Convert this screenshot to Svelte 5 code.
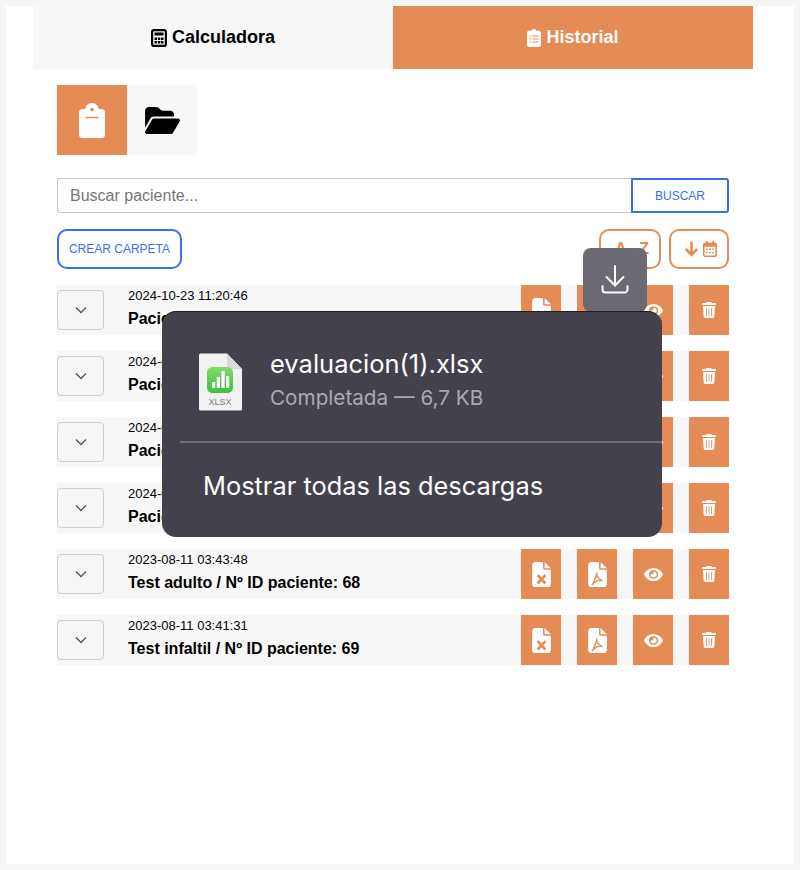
<script>
    const rows = [
        { date: "2024-10-23 11:20:46", title: "Paciente / Nº ID paciente: 74" },
        { date: "2024-09-12 10:14:22", title: "Paciente / Nº ID paciente: 73" },
        { date: "2024-06-05 09:31:10", title: "Paciente / Nº ID paciente: 72" },
        { date: "2024-02-19 16:02:37", title: "Paciente / Nº ID paciente: 71" },
        { date: "2023-08-11 03:43:48", title: "Test adulto / Nº ID paciente: 68" },
        { date: "2023-08-11 03:41:31", title: "Test infaltil / Nº ID paciente: 69" }
    ]

    const filePath = "M64 0C28.7 0 0 28.7 0 64V448c0 35.3 28.7 64 64 64H320c35.3 0 64-28.7 64-64V160H256c-17.7 0-32-14.3-32-32V0H64zM256 0V128H384L256 0z"
</script>

<div class="page">
    <div class="tabs">
        <button class="tab">
            <svg class="tab-icon" viewBox="0 0 16 18" width="16" height="18">
                <rect x="1.1" y="1.1" width="13.8" height="15.800" rx="2" fill="none" stroke="currentColor" stroke-width="2.200"/>
                <rect x="3.500" y="3.500" width="9" height="3" fill="currentColor"/>
                <path d="M3.500 8.500h2.500v2.500H3.500zM6.800 8.500h2.500v2.500H6.800zM10 8.500h2.500v2.500H10zM3.500 12h2.500v2.500H3.500zM6.800 12h2.500v2.500H6.800zM10 12h2.500v2.500H10z" fill="currentColor"/>
            </svg>
            Calculadora
        </button>
        <button class="tab active">
            <svg class="tab-icon" viewBox="0 0 14 18" width="14" height="18">
                <path d="M4.600 1.800a2.400 1.800 0 0 1 4.800 0h2.600a2 2 0 0 1 2 2V16a2 2 0 0 1-2 2H2a2 2 0 0 1-2-2V3.800a2 2 0 0 1 2-2z" fill="currentColor"/>
                <path d="M2.500 7h1.500M5.500 7h6M2.500 10h1.500M5.500 10h6M2.500 13h1.500M5.500 13h6" stroke="#e58b55" stroke-width="1.200"/>
            </svg>
            Historial
        </button>
    </div>

    <div class="content">
        <div class="views">
            <button class="view active" aria-label="Historial">
                <svg viewBox="0 0 26 35" width="26" height="35">
                    <path d="M6.500 6C6.500 2.500 9.400 0 13 0s6.500 2.500 6.500 6H22.500a3.500 3.500 0 0 1 3.500 3.500V31.500a3.500 3.500 0 0 1-3.500 3.500H3.500a3.500 3.500 0 0 1-3.500-3.500V9.500A3.500 3.500 0 0 1 3.500 6z" fill="#fff"/>
                    <circle cx="13" cy="6.500" r="1.800" fill="#e58b55"/>
                    <path d="M6.500 14.500h13" stroke="#e58b55" stroke-width="1.500"/>
                </svg>
            </button>
            <button class="view" aria-label="Carpetas">
                <svg viewBox="0 0 576 512" width="35" height="31">
                    <path d="M88.700 223.800L0 375.800V96C0 60.700 28.700 32 64 32H181.500c17 0 33.300 6.700 45.300 18.700l26.500 26.500c12 12 28.300 18.700 45.300 18.700H416c35.300 0 64 28.700 64 64v32H144c-22.800 0-43.800 12.100-55.300 31.800zm27.600 16.100C122.100 230 132.600 224 144 224H544c11.500 0 22 6.100 27.700 16.100s5.700 22.200-.1 32.100l-112 192C453.900 474 443.400 480 432 480H32c-11.500 0-22-6.100-27.700-16.100s-5.700-22.200 .1-32.100l112-192z" fill="#000"/>
                </svg>
            </button>
        </div>

        <div class="search">
            <input type="text" placeholder="Buscar paciente..." />
            <button class="search-btn">BUSCAR</button>
        </div>

        <div class="toolbar">
            <button class="new-folder">CREAR CARPETA</button>
            <div class="sorters">
                <button class="sorter az">A Z</button>
                <button class="sorter by-date" aria-label="Ordenar por fecha">
                    <svg viewBox="0 0 32 16" width="32" height="16">
                        <path d="M6.500 .5v13.500M.9 8l5.600 5.800L12.100 8" fill="none" stroke="currentColor" stroke-width="2.600"/>
                        <rect x="18.800" y="2.300" width="12.400" height="12.900" rx="1.300" fill="none" stroke="currentColor" stroke-width="1.600"/>
                        <path d="M18.800 3h12.400v2.800H18.800zM21 0h1.800V3H21zM27.200 0H29V3h-1.800z" fill="currentColor"/>
                        <path d="M21 7.500h1.800v1.500H21zM24.100 7.500h1.800v1.500h-1.800zM27.200 7.500H29v1.500h-1.800zM21 10.800h1.800v1.500H21zM24.100 10.800h1.800v1.500h-1.800zM27.200 10.800H29v1.500h-1.800z" fill="currentColor"/>
                    </svg>
                </button>
            </div>
        </div>

        <div class="list">
            {#each rows as row}
                <div class="row">
                    <button class="toggle" aria-label="Desplegar">
                        <svg viewBox="0 0 12 8" width="12" height="8">
                            <path d="M1 1.500l5 5 5-5" fill="none" stroke="#555" stroke-width="1.300"/>
                        </svg>
                    </button>
                    <div class="info">
                        <div class="date">{row.date}</div>
                        <div class="title">{row.title}</div>
                    </div>
                    <div class="actions">
                        <button class="action" aria-label="Excel">
                            <svg viewBox="0 0 384 512" width="19" height="25">
                                <path d={filePath} fill="#fff"/>
                                <path d="M112 270l160 170M272 270L112 440" stroke="#e58b55" stroke-width="56"/>
                            </svg>
                        </button>
                        <button class="action" aria-label="PDF">
                            <svg viewBox="0 0 384 512" width="19" height="25">
                                <path d={filePath} fill="#fff"/>
                                <path d="M178 222c-12 60 10 110 110 158-70-14-150 20-200 82 40-80 80-150 90-240z" fill="none" stroke="#e58b55" stroke-width="28" stroke-linejoin="round"/>
                            </svg>
                        </button>
                        <button class="action" aria-label="Ver">
                            <svg viewBox="0 0 576 512" width="19" height="15" preserveAspectRatio="none">
                                <path d="M288 32c-80.800 0-145.500 36.800-192.600 80.600C48.600 156 17.300 208 2.500 243.700c-3.300 7.900-3.300 16.700 0 24.600C17.300 304 48.600 356 95.400 399.400C142.500 443.200 207.200 480 288 480s145.500-36.800 192.600-80.600c46.800-43.500 78.100-95.400 93-131.100c3.300-7.900 3.300-16.700 0-24.600c-14.900-35.700-46.200-87.700-93-131.100C433.500 68.800 368.800 32 288 32zM144 256a144 144 0 1 1 288 0 144 144 0 1 1 -288 0zm144-64c0 35.300-28.700 64-64 64c-7.100 0-13.900-1.200-20.300-3.300c-5.500-1.800-11.900 1.600-11.700 7.400c.3 6.900 1.300 13.800 3.200 20.700c13.700 51.200 66.400 81.600 117.600 67.900s81.600-66.400 67.900-117.600c-11.100-41.500-47.800-69.400-88.600-71.100c-5.800-.2-9.200 6.100-7.400 11.700c2.100 6.400 3.300 13.200 3.300 20.300z" fill="#fff"/>
                            </svg>
                        </button>
                        <button class="action" aria-label="Borrar">
                            <svg viewBox="0 0 448 512" width="14" height="16">
                                <path d="M135.200 17.700L128 32H32C14.300 32 0 46.300 0 64S14.300 96 32 96H416c17.700 0 32-14.300 32-32s-14.300-32-32-32H320l-7.200-14.300C307.400 6.800 296.300 0 284.200 0H163.800c-12.100 0-23.200 6.800-28.600 17.700zM416 128H32L53.200 467c1.600 25.300 22.600 45 47.900 45H346.900c25.300 0 46.300-19.700 47.900-45L416 128z" fill="#fff"/>
                                <path d="M144 190v260M224 190v260M304 190v260" stroke="#e58b55" stroke-width="26"/>
                            </svg>
                        </button>
                    </div>
                </div>
            {/each}
        </div>
    </div>

    <!-- browser download popover, sits over the page -->
    <div class="dl-tile">
        <svg viewBox="0 0 28 30" width="28" height="30">
            <path d="M14 1v19M5.500 12l8.500 8.500 8.500-8.500M1.500 21v3.500a3 3 0 0 0 3 3h19a3 3 0 0 0 3-3V21" fill="none" stroke="#fafafc" stroke-width="2" stroke-linecap="round"/>
        </svg>
    </div>
    <div class="dl-panel">
        <div class="dl-file">
            <div class="file-icon">
                <svg viewBox="0 0 44 58" width="44" height="58">
                    <defs>
                        <linearGradient id="sheet-green" x1="0" y1="0" x2="0" y2="1">
                            <stop offset="0" stop-color="#7fdc6c"/>
                            <stop offset="1" stop-color="#3fbf3c"/>
                        </linearGradient>
                    </defs>
                    <path d="M1 2a1.500 1.500 0 0 1 1.500-1.500H29L44 16v40a1.500 1.500 0 0 1-1.500 1.500h-40A1.500 1.500 0 0 1 1 56z" fill="#f1f1f2"/>
                    <path d="M29 .5V13a3 3 0 0 0 3 3h12z" fill="#d9d9db"/>
                    <rect x="9" y="14" width="26" height="26" rx="5.500" fill="url(#sheet-green)"/>
                    <path d="M14 29h3.200v6H14zM18.800 24h3.200v11h-3.200zM23.400 18h3.200v17h-3.200zM28 23h3.200v12H28z" fill="#fff"/>
                </svg>
                <span class="file-ext">XLSX</span>
            </div>
            <div class="file-text">
                <div class="file-name">evaluacion(1).xlsx</div>
                <div class="file-meta">Completada — 6,7 KB</div>
            </div>
        </div>
        <div class="dl-all">Mostrar todas las descargas</div>
    </div>
</div>

<style>
    :global(body) {
        background: #f5f5f5;
        font-family: "Liberation Sans", Arial, sans-serif;
    }

    button {
        font-family: inherit;
        cursor: pointer;
        border: none;
        padding: 0;
    }

    .page {
        position: relative;
        width: 788px;
        height: 858px;
        margin: 6px;
        padding: 0 41px 0 27px;
        box-sizing: border-box;
        background: #fff;
    }

    .tabs {
        display: grid;
        grid-template-columns: 1fr 1fr;
        height: 63px;
    }

    .tab {
        display: flex;
        align-items: center;
        justify-content: center;
        gap: 5px;
        font-size: 18px;
        font-weight: bold;
        color: #000;
        background: #f7f7f7;
    }

    .tab.active {
        color: #fff;
        background: #e58b55;
    }

    .content {
        padding: 16px 24px 0;
    }

    .views {
        display: flex;
    }

    .view {
        display: flex;
        align-items: center;
        justify-content: center;
        width: 70px;
        height: 70px;
        background: #f7f7f7;
    }

    .view.active {
        background: #e58b55;
    }

    .search {
        display: flex;
        height: 35px;
        margin-top: 23px;
    }

    input {
        flex: 1;
        min-width: 0;
        padding: 0 12px;
        font-family: inherit;
        font-size: 16px;
        background: #fff;
        border: 1px solid #c8c8c8;
        border-right: none;
        border-radius: 3px 0 0 3px;
    }

    input::placeholder {
        color: #777;
    }

    .search-btn {
        width: 98px;
        font-size: 12px;
        color: #3a6fee;
        background: #fff;
        border: 2px solid #3a6fee;
        border-radius: 0 3px 3px 0;
    }

    .toolbar {
        display: flex;
        justify-content: space-between;
        height: 40px;
        margin-top: 16px;
    }

    .new-folder {
        width: 125px;
        font-size: 12px;
        color: #3a6fee;
        background: #fff;
        border: 2px solid #3a6fee;
        border-radius: 10px;
    }

    .sorters {
        display: flex;
        gap: 8px;
    }

    .sorter {
        display: flex;
        align-items: center;
        justify-content: center;
        height: 40px;
        color: #e58b55;
        background: #fff;
        border: 2px solid #e58b55;
        border-radius: 10px;
    }

    .az {
        width: 62px;
        padding-left: 4px;
        font-size: 16px;
        font-weight: bold;
        word-spacing: 9px;
    }

    .by-date {
        width: 60px;
        padding-left: 4px;
    }

    .list {
        display: flex;
        flex-direction: column;
        gap: 16px;
        margin-top: 16px;
    }

    .row {
        display: flex;
        align-items: center;
        height: 50px;
        background: #f7f7f7;
    }

    .toggle {
        display: flex;
        align-items: center;
        justify-content: center;
        flex: none;
        width: 47px;
        height: 40px;
        background: #f5f5f5;
        border: 1.500px solid #cfcfcf;
        border-radius: 4px;
    }

    .info {
        flex: 1;
        padding: 0 0 6px 24px;
    }

    .date {
        font-size: 13px;
        line-height: 20px;
        color: #000;
    }

    .title {
        margin-top: 3px;
        font-size: 16px;
        line-height: 20px;
        font-weight: bold;
        color: #000;
    }

    .actions {
        display: flex;
        gap: 16px;
    }

    .action {
        display: flex;
        align-items: center;
        justify-content: center;
        width: 40px;
        height: 50px;
        background: #e58b55;
    }

    .dl-tile {
        position: absolute;
        left: 577px;
        top: 242px;
        display: flex;
        align-items: center;
        justify-content: center;
        width: 64px;
        height: 64px;
        background: #6b6a72;
        border-radius: 8px;
    }

    .dl-panel {
        position: absolute;
        left: 156px;
        top: 305px;
        width: 500px;
        height: 226px;
        box-sizing: border-box;
        font-family: Inter, "Noto Sans", sans-serif;
        color: #fff;
        background: #43414c;
        border-top: 1px solid #1e1d22;
        border-radius: 14px;
    }

    .dl-file {
        display: flex;
        align-items: center;
        gap: 28px;
        height: 131px;
        margin-left: 18px;
        padding: 6px 0 0 18px;
        box-sizing: border-box;
        border-bottom: 2px solid #6e6d76;
    }

    .file-icon {
        position: relative;
        display: flex;
        width: 44px;
        height: 58px;
        margin-top: 4px;
    }

    .file-ext {
        position: absolute;
        left: 0;
        right: 0;
        bottom: 4px;
        font-family: "Liberation Sans", sans-serif;
        font-size: 9px;
        line-height: 10px;
        text-align: center;
        color: #808080;
    }

    .file-name {
        font-size: 25.500px;
        line-height: 30px;
    }

    .file-meta {
        margin-top: 7px;
        font-size: 20.700px;
        line-height: 24px;
        color: #aaa9b0;
    }

    .dl-all {
        padding: 28px 0 0 41px;
        font-size: 25.400px;
        line-height: 30px;
    }
</style>
